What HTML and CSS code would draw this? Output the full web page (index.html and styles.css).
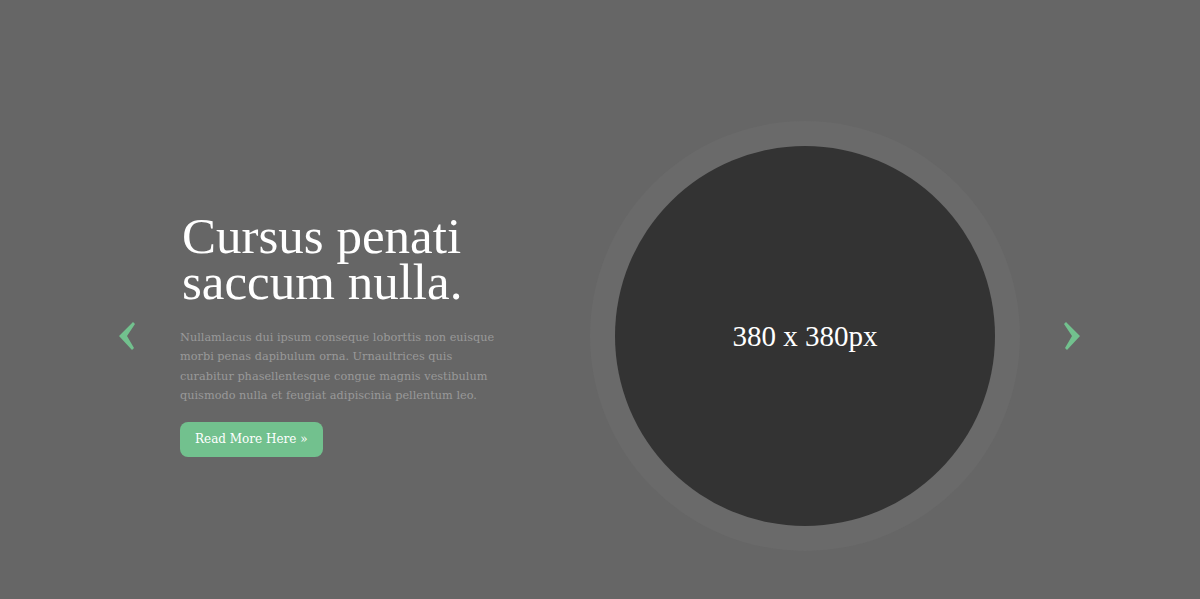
FILE: index.html
```html
<!DOCTYPE html>
<html>
<head>
<meta charset="utf-8">
<link rel="stylesheet" href="styles.css">
</head>
<body>
<section class="slider">
  <a class="arrow arrow-prev" href="#">
    <svg width="17" height="28" viewBox="0 0 17 28"><path d="M14 0 L16 2 L8 14 L15 26 L13 28 L0 14 Z" fill="#72c18e"/></svg>
  </a>
  <div class="caption">
    <h1 class="title">Cursus penati saccum nulla.</h1>
    <p class="text">Nullamlacus dui ipsum conseque loborttis non euisque morbi penas dapibulum orna. Urnaultrices quis curabitur phasellentesque congue magnis vestibulum quismodo nulla et feugiat adipiscinia pellentum leo.</p>
    <a class="btn" href="#">Read More Here »</a>
  </div>
  <div class="media">
    <div class="ring">
      <div class="photo">380 x 380px</div>
    </div>
  </div>
  <a class="arrow arrow-next" href="#">
    <svg width="17" height="28" viewBox="0 0 17 28"><path d="M3 0 L1 2 L9 14 L2 26 L4 28 L17 14 Z" fill="#72c18e"/></svg>
  </a>
</section>
</body>
</html>
```
FILE: styles.css
```css
html, body {
  margin: 0;
  padding: 0;
  background: #666666;
}
.slider {
  height: 599px;
  display: flex;
  align-items: center;
  padding: 73px 0 0 119px;
  box-sizing: border-box;
}
.arrow {
  display: block;
  width: 17px;
  height: 28px;
  line-height: 0;
}
.arrow-prev {
  margin-right: 44px;
}
.arrow-next {
  margin-left: 43px;
}
.caption {
  width: 410px;
  margin-top: 2px;
}
.title {
  margin: -4px 0 23px 2px;
  font-family: "Liberation Serif", "DejaVu Serif", serif;
  font-weight: normal;
  font-size: 51px;
  line-height: 46px;
  color: #ffffff;
}
.text {
  margin: 0 0 17px;
  width: 318px;
  font-family: "DejaVu Serif", serif;
  font-size: 11.3px;
  line-height: 19.3px;
  color: #999999;
}
.btn {
  display: inline-block;
  height: 35px;
  line-height: 35px;
  padding: 0 15px;
  border-radius: 8px;
  background: #72c18e;
  color: #ffffff;
  text-decoration: none;
  font-family: "DejaVu Serif", serif;
  font-size: 12px;
}
.ring {
  width: 430px;
  height: 430px;
  border-radius: 50%;
  background: #6a6a6a;
  display: flex;
  align-items: center;
  justify-content: center;
}
.photo {
  width: 380px;
  height: 380px;
  border-radius: 50%;
  background: #333333;
  display: flex;
  align-items: center;
  justify-content: center;
  color: #ffffff;
  font-family: "Liberation Serif", serif;
  font-size: 29px;
}
```
